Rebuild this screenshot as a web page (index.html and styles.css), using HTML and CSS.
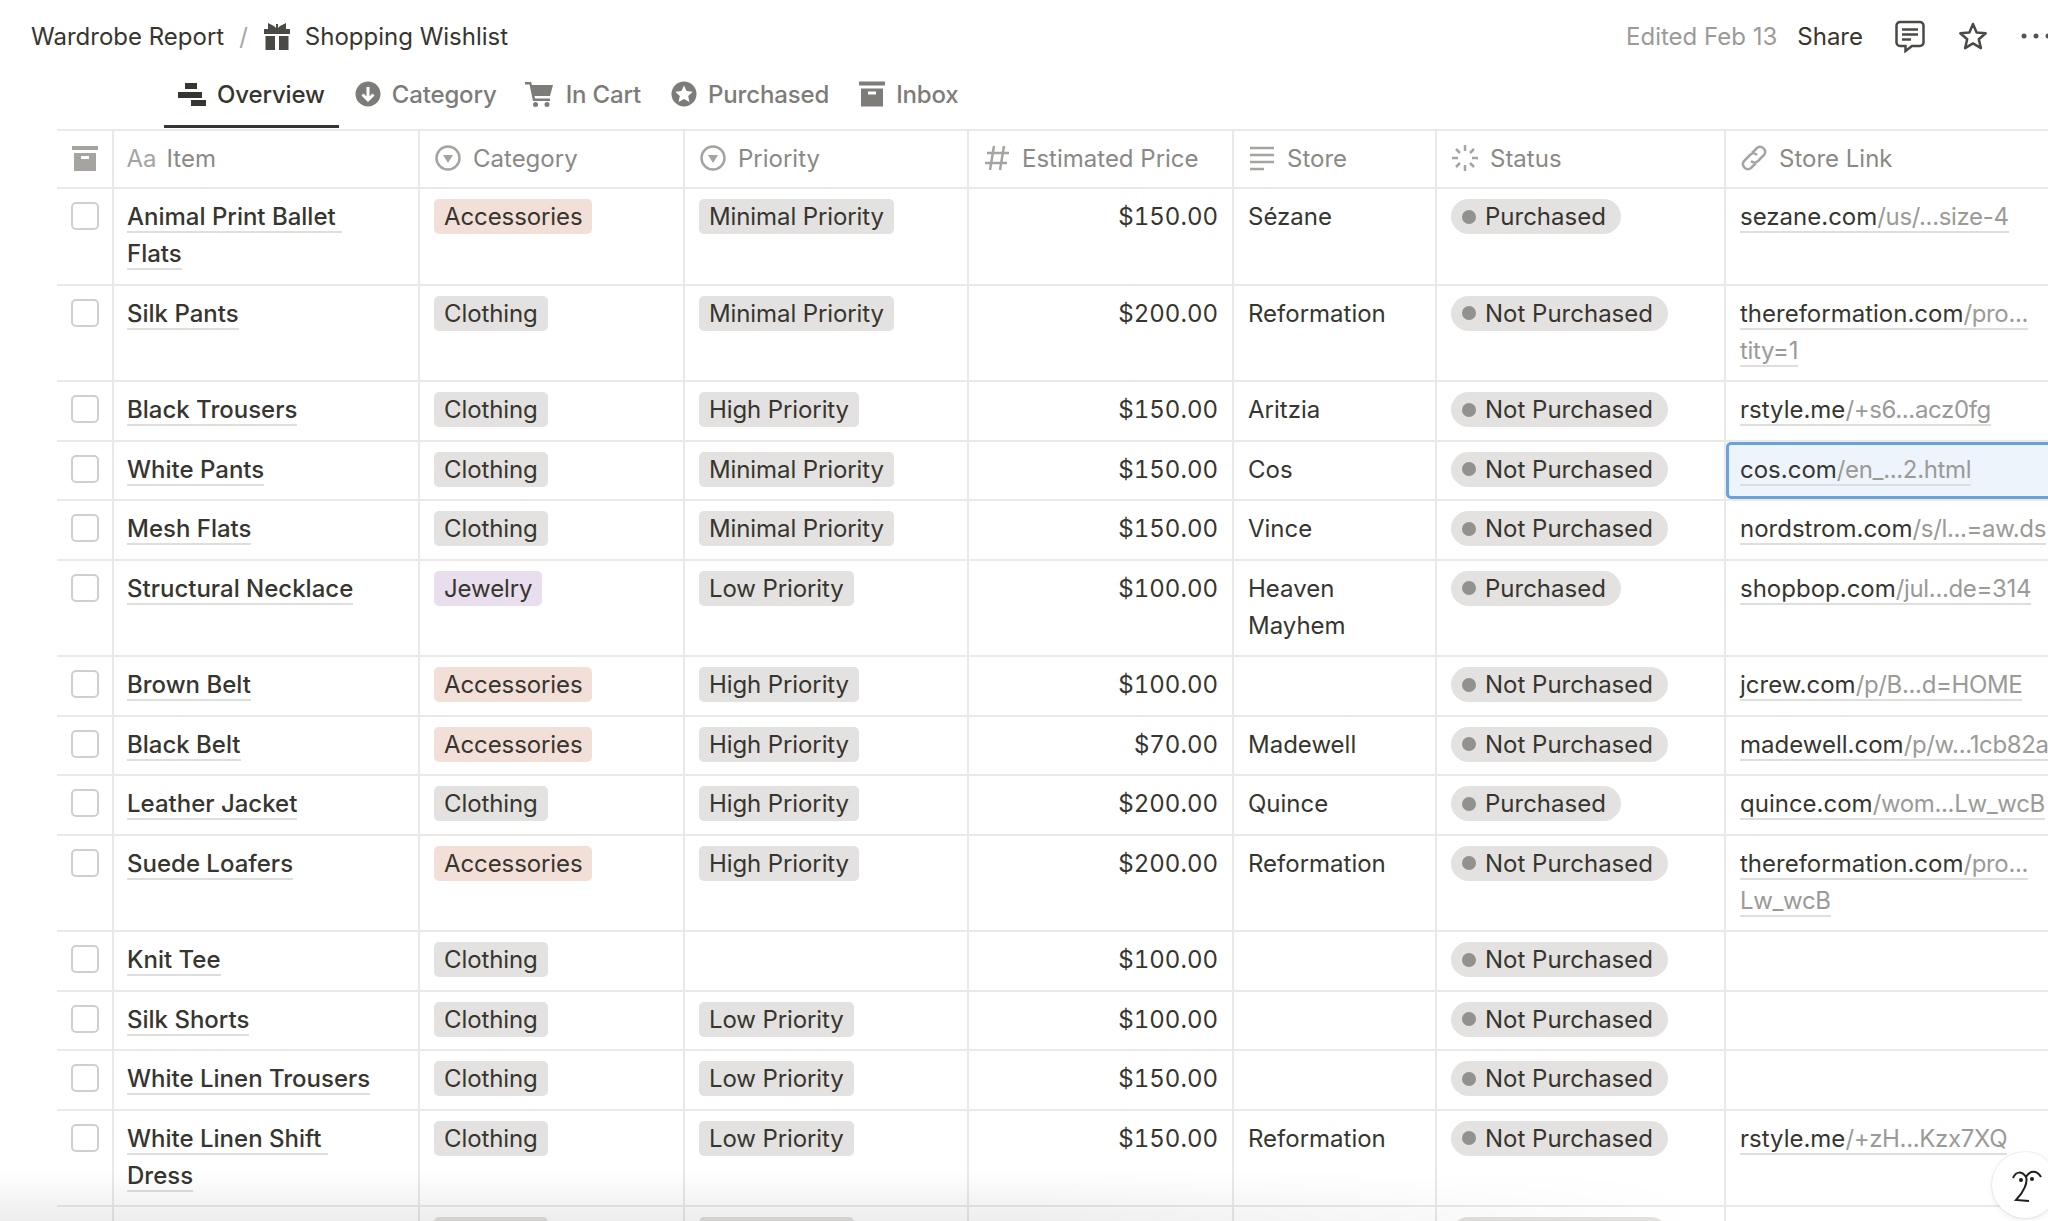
FILE: index.html
```html
<!DOCTYPE html>
<html lang="en">

<head>
    <meta charset="UTF-8">
    <title>Shopping Wishlist</title>
    <link rel="stylesheet" href="styles.css">
</head>

<body>
    <div class="topbar">
        <div class="crumbs">
            <span>Wardrobe Report</span>
            <span class="slash">/</span>
            <svg class="gift" viewBox="0 0 26 27"><path d="M4 0l6 3 2 2V1h2v4l2-2 6-3v6h4v5H0V6h4zM1.500 13H11v14H1.500zM15 13h9.500v14H15z"/></svg>
            <span>Shopping Wishlist</span>
        </div>
        <div class="actions">
            <span class="edited">Edited Feb 13</span>
            <span>Share</span>
            <svg class="comment" viewBox="0 0 30 33"><path d="M5 2h20a3.500 3.500 0 0 1 3.500 3.500v17a3.500 3.500 0 0 1-3.500 3.500H17l-6.500 5v-5H5a3.500 3.500 0 0 1-3.500-3.500v-17A3.500 3.500 0 0 1 5 2z"/><path d="M7 9.500h16M7 14.500h16M7 19.500h9"/></svg>
            <svg class="star" viewBox="0 0 30 28"><path d="M15 2l3.600 8.400 9.100.8-6.900 6 2.100 8.900-7.900-4.700-7.900 4.700 2.100-8.900-6.900-6 9.100-.8z"/></svg>
            <svg class="dots" viewBox="0 0 30 6"><circle cx="3" cy="3" r="2.500"/><circle cx="15" cy="3" r="2.500"/><circle cx="27" cy="3" r="2.500"/></svg>
        </div>
    </div>

    <div class="tabs">
        <div class="tab active">
            <svg class="overview" viewBox="0 0 28 23"><path d="M7 0h12v6H7zM0 9h24v6H0zM13 17h15v6H13z"/></svg>
            <span>Overview</span>
        </div>
        <div class="tab">
            <svg viewBox="0 0 26 26"><circle cx="13" cy="13" r="12.500"/><path class="cut" d="M13 6v13M7.500 13.500L13 19l5.500-5.500"/></svg>
            <span>Category</span>
        </div>
        <div class="tab">
            <svg class="cart" viewBox="0 0 28 25"><path d="M0 0h6l1 3h21l-3 11H9.500l.5 2.500h15V19H8L4.500 2.500H0z"/><circle cx="10.500" cy="22.500" r="2.500"/><circle cx="22" cy="22.500" r="2.500"/></svg>
            <span>In Cart</span>
        </div>
        <div class="tab">
            <svg viewBox="0 0 26 26"><circle cx="13" cy="13" r="12.500"/><path fill="#fff" d="M13 4.500l2.600 5.600 6.100.7-4.500 4.100 1.200 6-5.400-3-5.400 3 1.200-6-4.500-4.100 6.100-.7z"/></svg>
            <span>Purchased</span>
        </div>
        <div class="tab">
            <svg viewBox="0 0 26 25"><path fill-rule="evenodd" d="M0 0h26v4H0zM2 7h22v18H2zM9 10v3h8v-3z"/></svg>
            <span>Inbox</span>
        </div>
    </div>

    <div class="table">
        <div class="row head">
            <div class="cell">
                <svg class="box-icon" viewBox="0 0 26 25"><path fill-rule="evenodd" d="M0 0h26v4H0zM2 7h22v18H2zM9 10v3h8v-3z"/></svg>
            </div>
            <div class="cell"><span class="aa">Aa</span>Item</div>
            <div class="cell">
                <svg viewBox="0 0 26 26"><circle class="line" cx="13" cy="13" r="11.500"/><path d="M8 10h10l-5 8z"/></svg>
                Category
            </div>
            <div class="cell">
                <svg viewBox="0 0 26 26"><circle class="line" cx="13" cy="13" r="11.500"/><path d="M8 10h10l-5 8z"/></svg>
                Priority
            </div>
            <div class="cell">
                <svg viewBox="0 0 26 26"><path class="line" d="M10 1L6 25M20 1l-4 24M3 8h22M1 18h22"/></svg>
                Estimated Price
            </div>
            <div class="cell">
                <svg viewBox="0 0 26 26"><path class="line" d="M1 3h24M1 10h24M1 17h24M1 24h14"/></svg>
                Store
            </div>
            <div class="cell">
                <svg viewBox="0 0 26 26"><path class="line" d="M13 0v6M13 20v6M0 13h6M20 13h6M4 4l4 4M18 18l4 4M22 4l-4 4M8 18l-4 4"/></svg>
                Status
            </div>
            <div class="cell">
                <svg viewBox="0 0 26 26"><path class="line" d="M11 8l5-5a5 5 0 0 1 7 7l-6 6a5 5 0 0 1-7 0M15 18l-5 5a5 5 0 0 1-7-7l6-6a5 5 0 0 1 7 0"/></svg>
                Store Link
            </div>
        </div>

        <div class="row">
            <div class="cell"><span class="box"></span></div>
            <div class="cell"><a class="title">Animal Print Ballet&nbsp;<br>Flats</a></div>
            <div class="cell"><span class="tag orange">Accessories</span></div>
            <div class="cell"><span class="tag">Minimal Priority</span></div>
            <div class="cell price">$150.00</div>
            <div class="cell">Sézane</div>
            <div class="cell"><span class="tag status"><i></i>Purchased</span></div>
            <div class="cell"><a class="link">sezane.com<span>/us/...size-4</span></a></div>
        </div>
        <div class="row">
            <div class="cell"><span class="box"></span></div>
            <div class="cell"><a class="title">Silk Pants</a></div>
            <div class="cell"><span class="tag">Clothing</span></div>
            <div class="cell"><span class="tag">Minimal Priority</span></div>
            <div class="cell price">$200.00</div>
            <div class="cell">Reformation</div>
            <div class="cell"><span class="tag status"><i></i>Not Purchased</span></div>
            <div class="cell"><a class="link">thereformation.com<span>/pro...<br>tity=1</span></a></div>
        </div>
        <div class="row">
            <div class="cell"><span class="box"></span></div>
            <div class="cell"><a class="title">Black Trousers</a></div>
            <div class="cell"><span class="tag">Clothing</span></div>
            <div class="cell"><span class="tag">High Priority</span></div>
            <div class="cell price">$150.00</div>
            <div class="cell">Aritzia</div>
            <div class="cell"><span class="tag status"><i></i>Not Purchased</span></div>
            <div class="cell"><a class="link">rstyle.me<span>/+s6...acz0fg</span></a></div>
        </div>
        <div class="row">
            <div class="cell"><span class="box"></span></div>
            <div class="cell"><a class="title">White Pants</a></div>
            <div class="cell"><span class="tag">Clothing</span></div>
            <div class="cell"><span class="tag">Minimal Priority</span></div>
            <div class="cell price">$150.00</div>
            <div class="cell">Cos</div>
            <div class="cell"><span class="tag status"><i></i>Not Purchased</span></div>
            <div class="cell selected"><a class="link">cos.com<span>/en_...2.html</span></a></div>
        </div>
        <div class="row">
            <div class="cell"><span class="box"></span></div>
            <div class="cell"><a class="title">Mesh Flats</a></div>
            <div class="cell"><span class="tag">Clothing</span></div>
            <div class="cell"><span class="tag">Minimal Priority</span></div>
            <div class="cell price">$150.00</div>
            <div class="cell">Vince</div>
            <div class="cell"><span class="tag status"><i></i>Not Purchased</span></div>
            <div class="cell"><a class="link">nordstrom.com<span>/s/l...=aw.ds</span></a></div>
        </div>
        <div class="row">
            <div class="cell"><span class="box"></span></div>
            <div class="cell"><a class="title">Structural Necklace</a></div>
            <div class="cell"><span class="tag purple">Jewelry</span></div>
            <div class="cell"><span class="tag">Low Priority</span></div>
            <div class="cell price">$100.00</div>
            <div class="cell">Heaven<br>Mayhem</div>
            <div class="cell"><span class="tag status"><i></i>Purchased</span></div>
            <div class="cell"><a class="link">shopbop.com<span>/jul...de=314</span></a></div>
        </div>
        <div class="row">
            <div class="cell"><span class="box"></span></div>
            <div class="cell"><a class="title">Brown Belt</a></div>
            <div class="cell"><span class="tag orange">Accessories</span></div>
            <div class="cell"><span class="tag">High Priority</span></div>
            <div class="cell price">$100.00</div>
            <div class="cell"></div>
            <div class="cell"><span class="tag status"><i></i>Not Purchased</span></div>
            <div class="cell"><a class="link">jcrew.com<span>/p/B...d=HOME</span></a></div>
        </div>
        <div class="row">
            <div class="cell"><span class="box"></span></div>
            <div class="cell"><a class="title">Black Belt</a></div>
            <div class="cell"><span class="tag orange">Accessories</span></div>
            <div class="cell"><span class="tag">High Priority</span></div>
            <div class="cell price">$70.00</div>
            <div class="cell">Madewell</div>
            <div class="cell"><span class="tag status"><i></i>Not Purchased</span></div>
            <div class="cell"><a class="link">madewell.com<span>/p/w...1cb82a</span></a></div>
        </div>
        <div class="row">
            <div class="cell"><span class="box"></span></div>
            <div class="cell"><a class="title">Leather Jacket</a></div>
            <div class="cell"><span class="tag">Clothing</span></div>
            <div class="cell"><span class="tag">High Priority</span></div>
            <div class="cell price">$200.00</div>
            <div class="cell">Quince</div>
            <div class="cell"><span class="tag status"><i></i>Purchased</span></div>
            <div class="cell"><a class="link">quince.com<span>/wom...Lw_wcB</span></a></div>
        </div>
        <div class="row">
            <div class="cell"><span class="box"></span></div>
            <div class="cell"><a class="title">Suede Loafers</a></div>
            <div class="cell"><span class="tag orange">Accessories</span></div>
            <div class="cell"><span class="tag">High Priority</span></div>
            <div class="cell price">$200.00</div>
            <div class="cell">Reformation</div>
            <div class="cell"><span class="tag status"><i></i>Not Purchased</span></div>
            <div class="cell"><a class="link">thereformation.com<span>/pro...<br>Lw_wcB</span></a></div>
        </div>
        <div class="row">
            <div class="cell"><span class="box"></span></div>
            <div class="cell"><a class="title">Knit Tee</a></div>
            <div class="cell"><span class="tag">Clothing</span></div>
            <div class="cell"></div>
            <div class="cell price">$100.00</div>
            <div class="cell"></div>
            <div class="cell"><span class="tag status"><i></i>Not Purchased</span></div>
            <div class="cell"></div>
        </div>
        <div class="row">
            <div class="cell"><span class="box"></span></div>
            <div class="cell"><a class="title">Silk Shorts</a></div>
            <div class="cell"><span class="tag">Clothing</span></div>
            <div class="cell"><span class="tag">Low Priority</span></div>
            <div class="cell price">$100.00</div>
            <div class="cell"></div>
            <div class="cell"><span class="tag status"><i></i>Not Purchased</span></div>
            <div class="cell"></div>
        </div>
        <div class="row">
            <div class="cell"><span class="box"></span></div>
            <div class="cell"><a class="title">White Linen Trousers</a></div>
            <div class="cell"><span class="tag">Clothing</span></div>
            <div class="cell"><span class="tag">Low Priority</span></div>
            <div class="cell price">$150.00</div>
            <div class="cell"></div>
            <div class="cell"><span class="tag status"><i></i>Not Purchased</span></div>
            <div class="cell"></div>
        </div>
        <div class="row">
            <div class="cell"><span class="box"></span></div>
            <div class="cell"><a class="title">White Linen Shift&nbsp;<br>Dress</a></div>
            <div class="cell"><span class="tag">Clothing</span></div>
            <div class="cell"><span class="tag">Low Priority</span></div>
            <div class="cell price">$150.00</div>
            <div class="cell">Reformation</div>
            <div class="cell"><span class="tag status"><i></i>Not Purchased</span></div>
            <div class="cell"><a class="link">rstyle.me<span>/+zH...Kzx7XQ</span></a></div>
        </div>
        <div class="row">
            <div class="cell"></div>
            <div class="cell"></div>
            <div class="cell"><span class="tag">Clothing</span></div>
            <div class="cell"><span class="tag">Low Priority</span></div>
            <div class="cell"></div>
            <div class="cell"></div>
            <div class="cell"><span class="tag status"><i></i>Not Purchased</span></div>
            <div class="cell"></div>
        </div>
    </div>

    <div class="fade"></div>

    <div class="help">
        <svg viewBox="0 0 30 34"><path d="M1 10C4 3 10 3 14 9M14 9C18 2 25 2 29 9M14 9C16 14 12 24 4 32L17 33"/><circle cx="9" cy="12" r="2"/><circle cx="20" cy="11" r="2"/></svg>
    </div>
</body>

</html>
```

FILE: styles.css
```css
html,
body {
    height: 100%;
    overflow: hidden;
}

body {
    margin: 0;
    position: relative;
    background-color: #fff;
    color: #37352f;
    font-family: Inter, "Liberation Sans", sans-serif;
    font-size: 24px;
    line-height: 37px;
}

svg {
    display: block;
    flex: none;
    fill: currentColor;
}

/* top bar */
.topbar {
    display: flex;
    justify-content: space-between;
    align-items: center;
    height: 72px;
    padding-left: 31px;
    margin-right: -3px;
}

.crumbs,
.actions {
    display: flex;
    align-items: center;
}

.slash {
    margin: 0 16px 0 15px;
    color: #a5a4a1;
}

.gift {
    width: 26px;
    height: 27px;
    margin-right: 15px;
    color: #4a4946;
}

.edited {
    margin-right: 20px;
    color: #9b9a97;
}

.comment {
    width: 30px;
    height: 33px;
    margin-left: 32px;
    fill: none;
    stroke: #4a4946;
    stroke-width: 2.500;
}

.star {
    width: 30px;
    height: 28px;
    margin-left: 33px;
    fill: none;
    stroke: #4a4946;
    stroke-width: 2.500;
    stroke-linejoin: round;
}

.dots {
    width: 30px;
    height: 6px;
    margin-left: 33px;
    color: #55544f;
}

/* view tabs */
.tabs {
    display: flex;
    gap: 2px;
    height: 57px;
    padding-left: 164px;
}

.tab {
    display: flex;
    align-items: center;
    gap: 11px;
    height: 53px;
    padding: 0 14px 9px;
    box-sizing: border-box;
    color: #7d7c78;
    font-weight: 500;
    letter-spacing: -0.15px;
}

.tab svg {
    width: 26px;
    height: 26px;
}

.tab .cut {
    fill: none;
    stroke: #fff;
    stroke-width: 3;
}

.tab.active {
    height: 56px;
    color: #37352f;
    border-bottom: 3px solid #37352f;
}

.tab .overview {
    width: 28px;
    height: 23px;
}

.tab .cart {
    width: 28px;
    height: 25px;
    margin: 0 2px 0 -2px;
}

/* table */
.table {
    margin-left: 57px;
    border-top: 2px solid #e9e9e7;
}

.row {
    display: grid;
    grid-template-columns: 57px 306px 265px 284px 265px 203px 289px 340px;
    border-bottom: 2px solid #e9e9e7;
}

.cell {
    padding: 9px 15px 11.500px 14px;
    box-sizing: border-box;
    border-right: 2px solid #e9e9e7;
    white-space: nowrap;
}

.cell:nth-child(2) {
    padding-left: 13px;
}

.head .cell {
    display: flex;
    align-items: center;
    gap: 12px;
    height: 56px;
    padding: 0 15px 2px;
    color: #8a8985;
}

.head .cell:nth-child(2) {
    padding-left: 12.500px;
}

.head svg {
    width: 26px;
    height: 26px;
    color: #a5a4a1;
}

.head svg .line {
    fill: none;
    stroke: currentColor;
    stroke-width: 2.500;
}

.head .box-icon {
    height: 25px;
}

.aa {
    margin-right: -2px;
    color: #a5a4a1;
}

.box {
    display: block;
    width: 28px;
    height: 28px;
    margin-top: 4px;
    box-sizing: border-box;
    border: 2px solid #cfcfcc;
    border-radius: 5px;
}

.title {
    font-weight: 500;
    border-bottom: 2px solid #dededc;
}

.tag {
    display: inline-block;
    height: 35px;
    margin-top: 1px;
    padding: 0 10px;
    border-radius: 5px;
    background-color: #e3e2e0;
    line-height: 35px;
    letter-spacing: -0.1px;
    vertical-align: top;
}

.tag.orange {
    background-color: #f2dfd7;
}

.tag.purple {
    background-color: #e8deee;
}

.tag.status {
    display: inline-flex;
    align-items: center;
    gap: 9px;
    padding: 0 15px 0 11px;
    border-radius: 18px;
    letter-spacing: 0;
}

.tag.status i {
    width: 14px;
    height: 14px;
    border-radius: 50%;
    background-color: #91918e;
}

.price {
    padding-right: 14px;
    text-align: right;
    font-variant-numeric: tabular-nums;
}

.link {
    border-bottom: 2px solid #dededc;
}

.link span {
    color: #9b9a97;
    letter-spacing: -0.35px;
}

.selected {
    background-color: #eef4fc;
    border-radius: 5px;
    box-shadow: inset 0 0 0 3px #6aa1df;
}

/* bottom of the window */
.fade {
    position: absolute;
    left: 0;
    bottom: 0;
    width: 1700px;
    height: 50px;
    background: linear-gradient(to top, rgba(0, 0, 0, 0.07), rgba(0, 0, 0, 0));
    -webkit-mask-image: linear-gradient(to right, #000 60%, transparent);
    mask-image: linear-gradient(to right, #000 60%, transparent);
}

.help {
    position: absolute;
    left: 1992px;
    top: 1152px;
    display: flex;
    align-items: center;
    padding-left: 20px;
    width: 66px;
    height: 66px;
    box-sizing: border-box;
    border-radius: 50%;
    background-color: #fff;
    box-shadow: 0 0 0 1px rgba(0, 0, 0, 0.05), 0 2px 6px rgba(0, 0, 0, 0.08);
}

.help svg {
    width: 30px;
    height: 34px;
    fill: #1f1e1b;
}

.help path {
    fill: none;
    stroke: #1f1e1b;
    stroke-width: 2;
}
```
